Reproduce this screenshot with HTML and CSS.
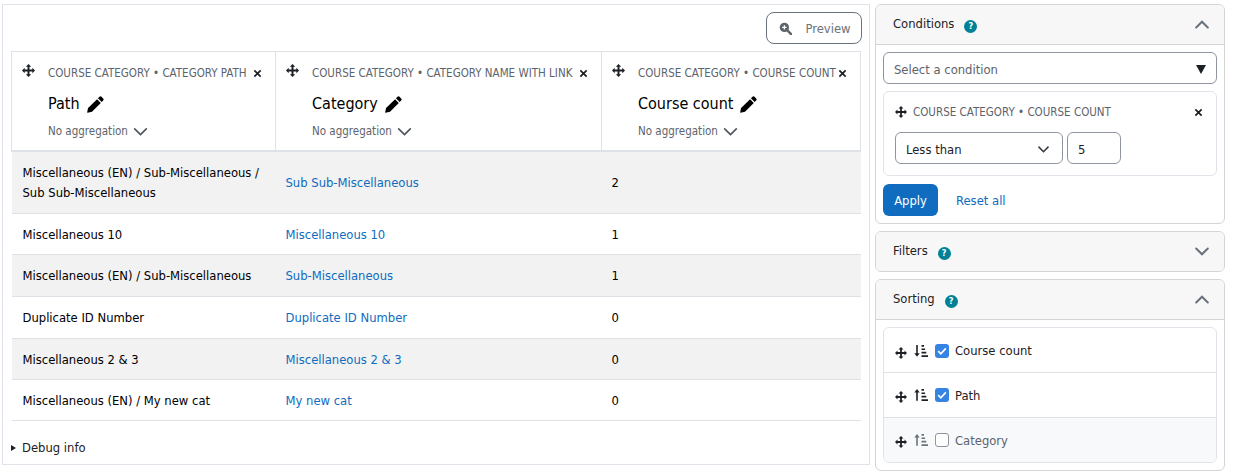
FILE: index.html
```html
<!DOCTYPE html>
<html lang="en">
<head>
<meta charset="utf-8">
<title>Report builder</title>
<link rel="stylesheet" href="styles.css">
</head>
<body>
<svg class="defs" width="0" height="0" aria-hidden="true">
  <defs>
    <symbol id="move" viewBox="0 0 16 16"><path fill="currentColor" d="M8 0 4.7 3.3h2.1v3.5H3.3V4.7L0 8l3.3 3.3V9.2h3.5v3.5H4.7L8 16l3.3-3.3H9.2V9.2h3.5v2.1L16 8l-3.3-3.3v2.1H9.2V3.3h2.1z"/></symbol>
    <symbol id="pencil" viewBox="0 0 18 18"><path fill="currentColor" d="M13.2.9a1.6 1.6 0 0 1 2.2 0l1.7 1.7a1.6 1.6 0 0 1 0 2.2l-1.6 1.6-3.9-3.9zM10.7 3.4l3.9 3.9-9.3 9.3-4.6 1.1a.4.4 0 0 1-.5-.5l.9-4.5z"/></symbol>
    <symbol id="close" viewBox="0 0 10 10"><path fill="none" stroke="currentColor" stroke-width="1.9" d="M1.5 1.5l7 7M8.5 1.5l-7 7"/></symbol>
    <symbol id="chev" viewBox="0 0 16 10"><path fill="none" stroke="currentColor" stroke-width="1.7" d="M1 1.5l7 7 7-7"/></symbol>
    <symbol id="chevb" viewBox="0 0 14 9"><path fill="none" stroke="currentColor" stroke-width="2" stroke-linecap="round" d="M1.2 1.5 7 7.3l5.8-5.8"/></symbol>
    <symbol id="sortdown" viewBox="0 0 14 12"><path fill="currentColor" d="M2.2 0h1.6v8.2h1.9L3 11.8.3 8.2h1.9zM7.5 0H10v1.7H7.5zM7.5 3.4h3.6v1.7H7.5zM7.5 6.8h4.8v1.7H7.5zM7.5 10.2H14v1.7H7.5z"/></symbol>
    <symbol id="sortup" viewBox="0 0 14 12"><path fill="currentColor" d="M3 0l2.7 3.6H3.8v8.2H2.2V3.6H.3zM7.5 0H10v1.7H7.5zM7.5 3.4h3.6v1.7H7.5zM7.5 6.8h4.8v1.7H7.5zM7.5 10.2H14v1.7H7.5z"/></symbol>
    <symbol id="tick" viewBox="0 0 14 14"><path d="M3.2 7.2l2.6 2.6 5-5.4" fill="none" stroke="#fff" stroke-width="1.7"/></symbol>
  </defs>
</svg>
<div class="page">
  <main class="report">
    <div class="toolbar">
      <button class="preview" type="button">
        <svg class="zoom-ico" viewBox="0 0 14 14" aria-hidden="true"><circle cx="5.8" cy="5.8" r="5" fill="#5d636a"/><path d="M9 9l4 4" stroke="#5d636a" stroke-width="2.6" stroke-linecap="round"/><path d="M3.4 5.8h4.8M5.8 3.4v4.8" stroke="#fff" stroke-width="1.4"/></svg>
        Preview
      </button>
    </div>
    <table class="grid">
      <colgroup><col class="c1"><col class="c2"><col class="c3"></colgroup>
      <thead>
        <tr>
          <th>
            <div class="col-head">
              <svg class="ico-move"><use href="#move"/></svg>
              <div class="col-main">
                <div class="col-src"><span>COURSE CATEGORY • CATEGORY PATH</span><svg class="ico-x"><use href="#close"/></svg></div>
                <div class="col-title">Path <svg class="ico-pen"><use href="#pencil"/></svg></div>
                <div class="col-agg">No aggregation <svg class="ico-chev"><use href="#chev"/></svg></div>
              </div>
            </div>
          </th>
          <th>
            <div class="col-head">
              <svg class="ico-move"><use href="#move"/></svg>
              <div class="col-main">
                <div class="col-src"><span>COURSE CATEGORY • CATEGORY NAME WITH LINK</span><svg class="ico-x"><use href="#close"/></svg></div>
                <div class="col-title">Category <svg class="ico-pen"><use href="#pencil"/></svg></div>
                <div class="col-agg">No aggregation <svg class="ico-chev"><use href="#chev"/></svg></div>
              </div>
            </div>
          </th>
          <th>
            <div class="col-head">
              <svg class="ico-move"><use href="#move"/></svg>
              <div class="col-main">
                <div class="col-src"><span>COURSE CATEGORY • COURSE COUNT</span><svg class="ico-x"><use href="#close"/></svg></div>
                <div class="col-title">Course count <svg class="ico-pen"><use href="#pencil"/></svg></div>
                <div class="col-agg">No aggregation <svg class="ico-chev"><use href="#chev"/></svg></div>
              </div>
            </div>
          </th>
        </tr>
      </thead>
      <tbody>
        <tr class="r-tall odd"><td>Miscellaneous (EN) / Sub-Miscellaneous /<br>Sub Sub-Miscellaneous</td><td><a href="#">Sub Sub-Miscellaneous</a></td><td>2</td></tr>
        <tr class="r1"><td>Miscellaneous 10</td><td><a href="#">Miscellaneous 10</a></td><td>1</td></tr>
        <tr class="r2 odd"><td>Miscellaneous (EN) / Sub-Miscellaneous</td><td><a href="#">Sub-Miscellaneous</a></td><td>1</td></tr>
        <tr class="r2"><td>Duplicate ID Number</td><td><a href="#">Duplicate ID Number</a></td><td>0</td></tr>
        <tr class="r1 odd"><td>Miscellaneous 2 &amp; 3</td><td><a href="#">Miscellaneous 2 &amp; 3</a></td><td>0</td></tr>
        <tr class="r1"><td>Miscellaneous (EN) / My new cat</td><td><a href="#">My new cat</a></td><td>0</td></tr>
      </tbody>
    </table>
    <div class="debug"><span class="tri"></span>Debug info</div>
  </main>

  <aside class="side">
    <section class="card c-cond">
      <header class="card-head">
        <span class="card-title">Conditions</span><span class="help">?</span>
        <svg class="ico-toggle up"><use href="#chevb"/></svg>
      </header>
      <div class="card-body">
        <div class="select-cond"><span>Select a condition</span><span class="caret"></span></div>
        <div class="cond">
          <div class="cond-top">
            <svg class="ico-move sm"><use href="#move"/></svg>
            <span class="cond-name">COURSE CATEGORY • COURSE COUNT</span>
            <svg class="ico-x dark"><use href="#close"/></svg>
          </div>
          <div class="cond-fields">
            <div class="field op"><span>Less than</span><svg class="ico-sel"><use href="#chevb"/></svg></div>
            <div class="field val">5</div>
          </div>
        </div>
        <div class="actions"><button class="apply" type="button">Apply</button><a class="reset" href="#">Reset all</a></div>
      </div>
    </section>

    <section class="card c-filt">
      <header class="card-head closed">
        <span class="card-title">Filters</span><span class="help">?</span>
        <svg class="ico-toggle"><use href="#chevb"/></svg>
      </header>
    </section>

    <section class="card c-sort">
      <header class="card-head">
        <span class="card-title">Sorting</span><span class="help">?</span>
        <svg class="ico-toggle up"><use href="#chevb"/></svg>
      </header>
      <div class="card-body sort-body">
        <ul class="sort-list">
          <li><svg class="ico-move sm"><use href="#move"/></svg><svg class="ico-sort"><use href="#sortdown"/></svg><span class="check on"><svg class="tick"><use href="#tick"/></svg></span><span>Course count</span></li>
          <li><svg class="ico-move sm"><use href="#move"/></svg><svg class="ico-sort"><use href="#sortup"/></svg><span class="check on"><svg class="tick"><use href="#tick"/></svg></span><span>Path</span></li>
          <li class="off"><svg class="ico-move sm"><use href="#move"/></svg><svg class="ico-sort"><use href="#sortup"/></svg><span class="check"></span><span>Category</span></li>
        </ul>
      </div>
    </section>
  </aside>
</div>
</body>
</html>
```

FILE: styles.css
```css
* { box-sizing: border-box; }
html, body { margin: 0; height: 100%; background: #fff; }
body { font-family: "DejaVu Sans Condensed", "Noto Sans", sans-serif; font-stretch: condensed; font-size: 12.9px; color: #1d2125; overflow: hidden; }
.defs { position: absolute; }
.page { display: flex; align-items: flex-start; gap: 5px; padding: 4px 0 0 2px; }

.report { width: 868px; height: 461px; border: 1px solid #e1e3ea; padding: 7px 8px 0; flex: none; }
.toolbar { display: flex; justify-content: flex-end; height: 39px; }
.preview { width: 96px; height: 32px; border: 1px solid #6a737b; border-radius: 8px; background: #fff; color: #6a737b; font: inherit; display: flex; align-items: center; justify-content: center; gap: 13px; padding: 0 0 0 2px; margin-right: -1px; }
.zoom-ico { width: 13px; height: 13px; }

.grid { width: 849px; border-collapse: collapse; table-layout: fixed; }
.c1 { width: 264px; } .c2 { width: 326px; } .c3 { width: 259px; }
.grid th { border: 1px solid #dee2e6; border-bottom: 2px solid #dee2e6; padding: 0; font-weight: 400; text-align: left; height: 99px; vertical-align: top; }
.col-head { display: flex; padding: 12px 0 0 10px; gap: 13px; }
.ico-move { width: 13px; height: 13px; color: #1d2125; flex: none; }
.col-main { flex: 1; min-width: 0; padding-right: 13px; }
.col-src { display: flex; align-items: center; justify-content: space-between; font-size: 11.5px; color: #5d636a; height: 16px; margin-top: 1px; white-space: nowrap; }
.ico-x { width: 9px; height: 9px; color: #1d2125; flex: none; }
.col-title { font-size: 16px; line-height: 24px; margin-top: 11px; color: #000; display: flex; align-items: center; gap: 7px; }
.ico-pen { width: 17px; height: 17px; color: #000; }
.col-agg { font-size: 11.5px; color: #5d636a; margin-top: 7px; line-height: 16px; display: flex; align-items: center; gap: 5px; }
.ico-chev { width: 15px; height: 9px; color: #4b5259; }

.grid td { padding: 0 10px; border-bottom: 1px solid #dee2e6; line-height: 20px; color: #000; vertical-align: middle; }
.grid td:first-child { padding-left: 11px; }
.r-tall td, .r1 td { padding-top: 1px; }
.grid tr.odd td { background: #f2f2f2; }
.r-tall { height: 63px; } .r1 { height: 41px; } .r2 { height: 42px; }
.grid a { color: #0f6cbf; text-decoration: none; }

.debug { margin-top: 18px; display: flex; align-items: center; gap: 6px; color: #1d2125; line-height: 18px; }
.tri { width: 0; height: 0; border-left: 5px solid #1d2125; border-top: 3px solid transparent; border-bottom: 3px solid transparent; }

.side { width: 350px; flex: none; display: flex; flex-direction: column; gap: 7px; }
.card { border: 1px solid #d4d4d4; border-radius: 6px; overflow: hidden; background: #fff; }
.c-cond { height: 220px; } .c-filt { height: 41px; } .c-sort { height: 192px; }
.card-head { position: relative; height: 40px; background: #f7f7f7; border-bottom: 1px solid #d4d4d4; display: flex; align-items: center; padding: 0 17px; color: #1d2125; }
.card-head.closed { border-bottom: 0; height: 39px; }
.card-title { position: relative; top: -1px; }
.help { position: relative; top: 2px; width: 13px; height: 13px; border-radius: 50%; background: #008196; color: #fff; font-size: 9px; font-weight: 700; line-height: 13px; text-align: center; margin-left: 10px; }
.ico-toggle { position: absolute; right: 15px; top: 15px; width: 14px; height: 9px; color: #6a737b; }
.ico-toggle.up { transform: rotate(180deg); }
.card-body { padding: 7px 7px 0; }
.select-cond { height: 32px; border: 1px solid #8f959e; border-radius: 6px; display: flex; align-items: center; justify-content: space-between; padding: 2px 10px 0; color: #5d636a; }
.caret { width: 0; height: 0; border-top: 9px solid #1d2125; border-left: 5px solid transparent; border-right: 5px solid transparent; }
.cond { height: 85px; margin-top: 7px; border: 1px solid #e1e3ea; border-radius: 6px; padding: 0 11px; }
.cond-top { display: flex; align-items: center; height: 40px; }
.ico-move.sm { width: 12px; height: 12px; }
.cond-name { font-size: 11.5px; color: #5d636a; margin-left: 6px; flex: 1; }
.ico-x.dark { margin-right: 2px; }
.cond-fields { display: flex; gap: 4px; }
.field { height: 32px; border: 1px solid #8f959e; border-radius: 6px; display: flex; align-items: center; padding-top: 2px; color: #1d2125; }
.op { width: 168px; padding: 2px 13px 0 10px; justify-content: space-between; }
.ico-sel { width: 11px; height: 7px; color: #343a40; }
.val { width: 54px; padding-left: 10px; }
.actions { margin-top: 8px; display: flex; align-items: center; gap: 18px; }
.apply { width: 55px; height: 32px; background: #0f6cbf; color: #fff; border: 0; border-radius: 6px; font: inherit; padding: 0; }
.reset { color: #0f6cbf; text-decoration: none; }

.sort-body { padding-top: 7px; }
.sort-list { list-style: none; margin: 0; padding: 0; border: 1px solid #e1e3ea; border-radius: 6px; overflow: hidden; }
.sort-list li { height: 45px; display: flex; align-items: center; padding-left: 11px; color: #1d2125; border-bottom: 1px solid #dee2e6; }
.sort-list li:first-child { padding-top: 1px; }
.sort-list li:last-child { border-bottom: 0; height: 44px; }
.sort-list li.off { background: #f8f9fa; color: #5d636a; }
.sort-list .ico-move { position: relative; top: 2px; }
.ico-sort { width: 14px; height: 12px; margin-left: 7px; color: #1d2125; }
.off .ico-sort { color: #6a737b; }
.check { width: 14px; height: 14px; border-radius: 3px; border: 1px solid #8f959e; background: #fff; margin: 0 6px 0 7px; flex: none; }
.check.on { border: 0; background: #3584e4; }
.tick { display: block; width: 14px; height: 14px; }
```
